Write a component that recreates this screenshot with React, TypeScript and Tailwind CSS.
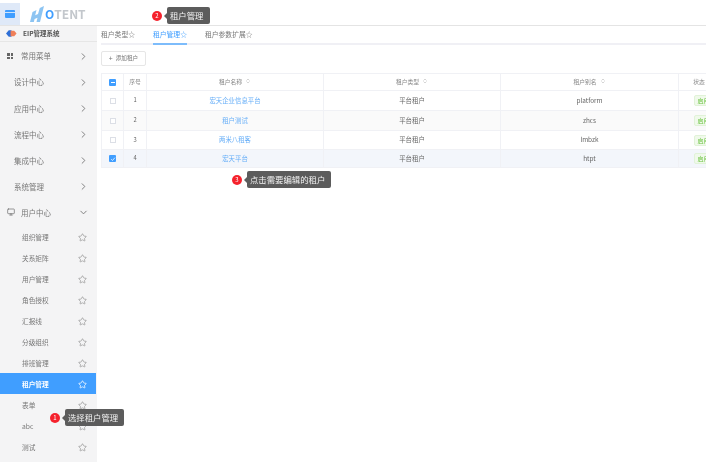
import { ChevronDown, ChevronRight, ChevronsUpDown, Monitor, Star } from 'lucide-react'

const groups = ['设计中心', '应用中心', '流程中心', '集成中心', '系统管理']
const subItems = ['组织管理', '关系矩阵', '用户管理', '角色授权', '汇报线', '分级组织', '排班管理', '租户管理', '表单', 'abc', '测试']

const tenants = [
  { no: 1, name: '宏天企业信息平台', type: '平台租户', alias: 'platform', row: 'bg-white', h: 'h-[20px]' },
  { no: 2, name: '租户测试', type: '平台租户', alias: 'zhcs', row: 'bg-[#fafafa]', h: 'h-[20px]' },
  { no: 3, name: '两米八租客', type: '平台租户', alias: 'lmbzk', row: 'bg-white', h: 'h-[19px]' },
  { no: 4, name: '宏天平台', type: '平台租户', alias: 'htpt', row: 'bg-[#f3f6fb]', h: 'h-[18px]' },
]

function Step({ n, text, className }: { n: number; text: string; className: string }) {
  return (
    <div className={`absolute flex items-center ${className}`}>
      <span className="flex h-[10px] w-[10px] items-center justify-center rounded-full bg-[#f5222d] text-[6px] leading-none text-white">
        {n}
      </span>
      <span className="ml-[2px] h-0 w-0 border-y-[3px] border-r-[3px] border-y-transparent border-r-[#5c5c5c]" />
      <span className="flex h-[17px] items-center rounded-[2px] bg-[#5c5c5c] pr-[6px] pl-[3px] text-[8.4px] whitespace-nowrap text-[#f2f2f2]">
        {text}
      </span>
    </div>
  )
}

function Checkbox({ state }: { state?: 'all' | 'on' }) {
  if (!state) return <span className="mx-auto block h-[6px] w-[6px] border border-[#dcdfe6] bg-white" />
  return (
    <span className="mx-auto flex h-[7px] w-[7px] items-center justify-center rounded-[1px] bg-[#409eff]">
      {state === 'all' ? (
        <span className="h-px w-[4px] bg-white" />
      ) : (
        <svg viewBox="0 0 8 8" className="h-[6px] w-[6px]" fill="none" stroke="white" strokeWidth="1">
          <path d="M1.5 4.2 3.3 6 6.6 2.2" />
        </svg>
      )}
    </span>
  )
}

function Sort() {
  return <ChevronsUpDown className="ml-[3px] inline h-[6px] w-[6px] align-[-0.5px] text-[#aaa]" />
}

export default function App() {
  return (
    <div
      className="relative flex h-[466px] w-[706px] flex-col overflow-hidden bg-white pb-[4px] text-[#666] blur-[0.45px]"
      style={{ fontFamily: '"Noto Sans CJK SC", "Noto Sans", sans-serif' }}
    >
      {/* Header */}
      <header className="flex h-[26px] shrink-0 items-end border-b border-[#e4e4e4]">
        <div className="flex h-[22px] w-[20px] items-center justify-center bg-[#dfe9f8]">
          <div className="h-[8px] w-[10px] rounded-[1px] bg-[#409eff] pt-[2px]">
            <div className="h-px bg-[#cfe4fb]" />
          </div>
        </div>
        <div className="mb-[3px] ml-[10px] flex items-center">
          <svg viewBox="0 0 14 16" className="h-[16px] w-[14px]">
            <path d="M0 16 2.5 6 6.5 4 5.2 9.2 8 8 9.8 2 14 0 10 16 6.5 16 7.5 11.8 4.6 13 3.8 16Z" fill="#8cc4f2" />
          </svg>
          <span className="ml-px text-[12px] leading-none font-bold text-[#409eff]">O</span>
          <span className="text-[12px] leading-none font-bold text-[#c3c7cc]">TENT</span>
        </div>
      </header>

      <div className="flex min-h-0 flex-1">
        {/* Sidebar */}
        <aside className="w-[97px] shrink-0 bg-[#f4f4f5]">
          <div className="flex h-[16px] items-center border-b border-[#e6e6e6] pl-[6px] text-[6.5px] font-bold text-[#555]">
            <svg viewBox="0 0 12 8" className="mr-[6px] h-[9px] w-[11px]">
              <path d="M0 4 3 0.5 6 0.5 6 7.5 3 7.5Z" fill="#2f6fd6" />
              <path d="M5 1 9 1 11.5 4 9 7 5 7Z" fill="#f0805a" />
            </svg>
            EIP管理系统
          </div>

          <div className="flex h-[27px] items-center pt-[1px] pr-[8px] pl-[7px] text-[7.5px] text-[#777]">
            <span className="mr-[8px] grid h-[6px] w-[6px] grid-cols-2 gap-px">
              <i className="bg-[#666]" />
              <i className="bg-[#666]" />
              <i className="bg-[#666]" />
              <i className="bg-[#666]" />
            </span>
            <span className="flex-1">常用菜单</span>
            <ChevronRight className="h-[11px] w-[11px] text-[#777]" strokeWidth={2} />
          </div>

          {groups.map((g) => (
            <div key={g} className="flex h-[26.2px] items-center pr-[8px] pl-[14px] text-[7.5px] text-[#777]">
              <span className="flex-1">{g}</span>
              <ChevronRight className="h-[11px] w-[11px] text-[#777]" strokeWidth={2} />
            </div>
          ))}

          <div className="flex h-[25px] items-center pr-[8px] pl-[7px] text-[7.5px] text-[#777]">
            <Monitor className="mr-[6px] h-[8px] w-[8px] text-[#666]" />
            <span className="flex-1">用户中心</span>
            <ChevronDown className="h-[11px] w-[11px] text-[#777]" strokeWidth={2} />
          </div>

          <div className="pt-[1px]">
            {subItems.map((s) => {
              const active = s === '租户管理'
              return (
                <div
                  key={s}
                  className={`flex h-[21px] items-center pt-[1px] pl-[22px] text-[6.7px] ${
                    active ? 'mr-px bg-[#409eff] pr-[9px] font-bold text-white' : 'pr-[10px] text-[#777]'
                  }`}
                >
                  <span className="flex-1">{s}</span>
                  <Star className={`mt-[1px] h-[9px] w-[9px] ${active ? 'text-white' : 'text-[#999]'}`} />
                </div>
              )
            })}
          </div>
        </aside>

        {/* Main */}
        <main className="min-w-0 flex-1 pl-[4px]">
          <div className="flex h-[19px] items-center gap-[18px] border-b-2 border-[#f0f0f5] text-[6.8px] text-[#777]">
            <span className="flex h-[17px] items-center">租户类型☆</span>
            <span className="-mb-[2px] flex h-[19px] items-center border-b-2 border-[#7dbcfb] text-[#409eff]">租户管理☆</span>
            <span className="flex h-[17px] items-center">租户参数扩展☆</span>
          </div>

          <div className="h-[28px] pt-[6px]">
            <button className="flex h-[15px] w-[45px] items-center justify-center rounded-[2px] border border-[#e6e6e6] text-[5.6px] text-[#777]">
              <span className="mr-[3px] text-[7px] leading-none">+</span>添加租户
            </button>
          </div>

          <table className="w-[627px] table-fixed border-collapse text-center text-[6.4px]">
            <colgroup>
              <col className="w-[22px]" />
              <col className="w-[23px]" />
              <col className="w-[177px]" />
              <col className="w-[177px]" />
              <col className="w-[178px]" />
              <col className="w-[50px]" />
            </colgroup>
            <thead>
              <tr className="h-[17px] border border-[#f0f1f5] text-[5.8px] text-[#888]">
                <th className="border-r border-[#f0f1f5] font-normal"><Checkbox state="all" /></th>
                <th className="border-r border-[#f0f1f5] font-normal">序号</th>
                <th className="border-r border-[#f0f1f5] font-normal">租户名称<Sort /></th>
                <th className="border-r border-[#f0f1f5] font-normal">租户类型<Sort /></th>
                <th className="border-r border-[#f0f1f5] font-normal">租户别名<Sort /></th>
                <th className="font-normal">状态<Sort /></th>
              </tr>
            </thead>
            <tbody>
              {tenants.map((t) => (
                <tr key={t.no} className={`${t.h} ${t.row} border border-[#f0f1f5]`}>
                  <td className="border-r border-[#f0f1f5]"><Checkbox state={t.no === 4 ? 'on' : undefined} /></td>
                  <td className="border-r border-[#f0f1f5] text-[5.8px]">{t.no}</td>
                  <td className="border-r border-[#f0f1f5] text-[#66aef8]">{t.name}</td>
                  <td className="border-r border-[#f0f1f5]">{t.type}</td>
                  <td className="border-r border-[#f0f1f5]">{t.alias}</td>
                  <td>
                    <span className="mx-auto flex h-[11px] w-[20px] items-center justify-center rounded-[2px] border border-[#e1f3d8] bg-[#f0f9eb] text-[6px] text-[#67c23a]">
                      启用
                    </span>
                  </td>
                </tr>
              ))}
            </tbody>
          </table>
        </main>
      </div>

      <Step n={2} text="租户管理" className="top-[7px] left-[152px]" />
      <Step n={3} text="点击需要编辑的租户" className="top-[171px] left-[232px]" />
      <Step n={1} text="选择租户管理" className="top-[409px] left-[50px]" />
    </div>
  )
}
